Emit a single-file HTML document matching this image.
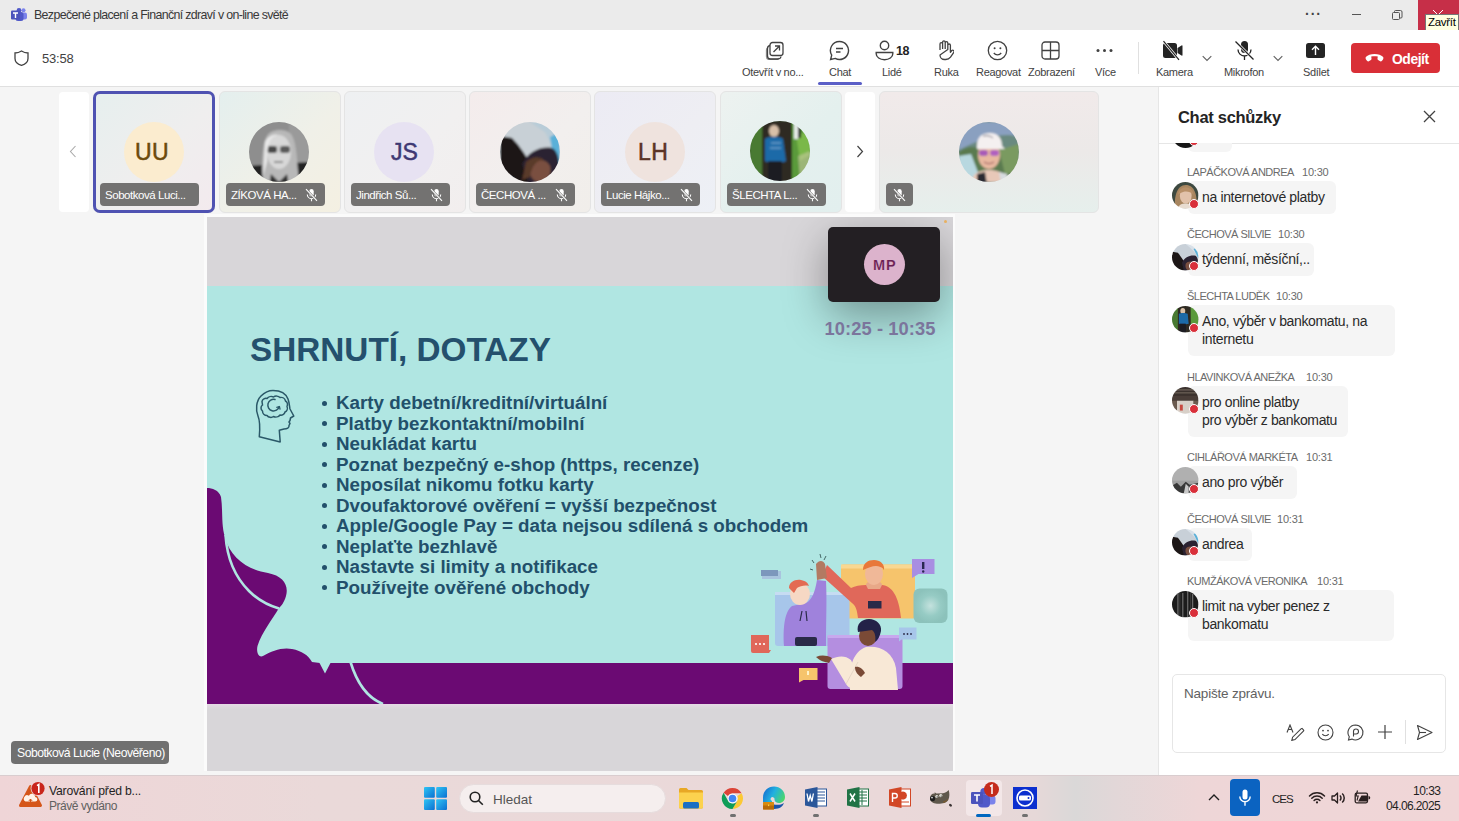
<!DOCTYPE html>
<html><head><meta charset="utf-8">
<style>
*{box-sizing:border-box;margin:0;padding:0}
html,body{width:1459px;height:821px;overflow:hidden;background:#f5f5f5;font-family:"Liberation Sans",sans-serif;color:#242424}
.a{position:absolute}
.t{position:absolute;white-space:nowrap;line-height:1}
#titlebar{left:0;top:0;width:1459px;height:30px;background:#ebebeb}
#toolbar{left:0;top:30px;width:1459px;height:57px;background:#fff;border-bottom:1px solid #e0e0e0;box-shadow:0 1px 1px rgba(0,0,0,0.05)}
#main{left:0;top:87px;width:1158px;height:688px;background:#f5f5f5}
#chat{left:1158px;top:87px;width:301px;height:688px;background:#fff;border-left:1px solid #e8e8e8}
#taskbar{left:0;top:775px;width:1459px;height:46px;background:#ecd8da}
.lbl{font-size:11px;color:#424242;letter-spacing:-0.3px}
.tile{position:absolute;top:91px;height:122px;width:122px;border-radius:6px;border:1px solid #e4e4e4;background:linear-gradient(135deg,#e9f1ef,#f3f0ee 60%,#f1ecee)}
.badge{position:absolute;top:92px;height:23px;border-radius:4px;background:#707070;color:#fff;font-size:11.5px;letter-spacing:-0.3px}
.av{position:absolute;border-radius:50%}
.cname{position:absolute;font-size:11px;color:#6b6b6b;letter-spacing:-0.5px;white-space:nowrap;line-height:1}
.bub{position:absolute;background:#f5f5f5;border-radius:6px}
.btxt{position:absolute;font-size:14px;color:#2a2a2a;letter-spacing:-0.35px;white-space:nowrap;line-height:19px}
.cav{position:absolute;width:27px;height:27px;border-radius:50%}
.rdot{position:absolute;width:10px;height:10px;border-radius:50%;background:#d92f3a;border:1.5px solid #fff}
.bl{font-size:18.8px;font-weight:700;color:#22506b;letter-spacing:0}
</style></head><body>
<!-- TITLE BAR -->
<div id="titlebar" class="a"></div>
<svg class="a" style="left:11px;top:8px" width="16" height="13" viewBox="0 0 16 13">
<circle cx="12.5" cy="2.2" r="2" fill="#7b83eb"/><rect x="9" y="4.5" width="7" height="7" rx="2" fill="#7b83eb"/>
<circle cx="8" cy="2.5" r="2.4" fill="#5059c9"/><rect x="4.5" y="4" width="8" height="9" rx="2.5" fill="#5059c9"/>
<rect x="0" y="2.5" width="9" height="9" rx="1" fill="#4b53bc"/><path d="M2 5h5M4.5 5v5" stroke="#fff" stroke-width="1.4"/>
</svg>
<div class="t" style="left:34px;top:8.5px;font-size:12.4px;color:#383838;letter-spacing:-0.65px">Bezpečené placení a Finanční zdraví v on-line světě</div>
<div class="t" style="left:1305px;top:7px;font-size:14px;color:#444;letter-spacing:1px;font-weight:700">···</div>
<div class="a" style="left:1352px;top:14px;width:9px;height:1px;background:#555"></div>
<svg class="a" style="left:1392px;top:10px" width="11" height="10" viewBox="0 0 11 10"><rect x="0.5" y="2.5" width="7" height="7" rx="1" fill="none" stroke="#555"/><path d="M2.5 2.5V1.5a1 1 0 0 1 1-1h5a1.5 1.5 0 0 1 1.5 1.5v5a1 1 0 0 1-1 1h-1" fill="none" stroke="#555"/></svg>
<div class="a" style="left:1418px;top:0;width:41px;height:30px;background:#c62f48"></div>
<svg class="a" style="left:1432px;top:9px" width="12" height="12" viewBox="0 0 12 12"><path d="M1 1L11 11M11 1L1 11" stroke="#fff" stroke-width="1"/></svg>
<div class="a" style="left:1425px;top:14px;width:34px;height:18px;background:#ffffe1;border:1px solid #767676"></div>
<div class="t" style="left:1428px;top:17px;font-size:11.5px;color:#000;letter-spacing:-0.3px">Zavřít</div>

<!-- TOOLBAR -->
<div id="toolbar" class="a"></div>
<svg class="a" style="left:14px;top:50px" width="15" height="16" viewBox="0 0 15 16"><path d="M7.5 1C5.5 2.3 3.3 3 1 3v5.5c0 3.3 2.6 5.8 6.5 6.9 3.9-1.1 6.5-3.6 6.5-6.9V3C11.7 3 9.5 2.3 7.5 1z" fill="none" stroke="#424242" stroke-width="1.3"/></svg>
<div class="t" style="left:42px;top:52px;font-size:13px;color:#424242;letter-spacing:-0.2px">53:58</div>


<!-- toolbar buttons -->
<svg class="a" style="left:765px;top:41px" width="20" height="19" viewBox="0 0 20 19" fill="none" stroke="#424242" stroke-width="1.3">
<rect x="5" y="1.5" width="13" height="13" rx="2.5"/><path d="M5 4.5a3 3 0 0 0-2.5 3V15a3 3 0 0 0 3 3h7.5a3 3 0 0 0 3-2.5"/><path d="M3 6.5a3 3 0 0 0-1.5 2.5V15.5a3 3 0 0 0 3 3h7a3 3 0 0 0 2.5-1.5" opacity="0.6"/><path d="M8.5 11L14.5 5M10 5h4.5v4.5"/>
</svg>
<div class="t lbl" style="left:742px;top:67px">Otevřít v no...</div>
<svg class="a" style="left:829px;top:40px" width="21" height="21" viewBox="0 0 21 21" fill="none" stroke="#424242" stroke-width="1.4">
<path d="M10.5 1.5a9 9 0 1 1-4.3 16.9L1.6 19.5l1.1-4.4A9 9 0 0 1 10.5 1.5z"/><path d="M7 8.5h7M7 12h4.5"/>
</svg>
<div class="t lbl" style="left:829px;top:67px">Chat</div>
<div class="a" style="left:818px;top:82px;width:44px;height:3px;border-radius:2px;background:#5b5fc7"></div>
<svg class="a" style="left:875px;top:40px" width="19" height="21" viewBox="0 0 19 21" fill="none" stroke="#424242" stroke-width="1.4">
<circle cx="9.5" cy="5.5" r="4.2"/><path d="M1.2 12.5h16.6v1.2c0 3.5-3.7 6-8.3 6s-8.3-2.5-8.3-6z"/>
</svg>
<div class="t" style="left:896px;top:45px;font-size:12.5px;font-weight:700;color:#242424;letter-spacing:-0.4px">18</div>
<div class="t lbl" style="left:882px;top:67px">Lidé</div>
<svg class="a" style="left:936px;top:40px" width="18" height="21" viewBox="0 0 18 21" fill="none" stroke="#424242" stroke-width="1.3" stroke-linejoin="round">
<path d="M4 10V4a1.3 1.3 0 0 1 2.6 0v5M6.6 9V2.2a1.3 1.3 0 0 1 2.6 0V9M9.2 9V3a1.3 1.3 0 0 1 2.6 0v6.5M11.8 9.5V5.3a1.3 1.3 0 0 1 2.6 0v7l1.4-1.8a1.4 1.4 0 0 1 2 1.9l-3.3 4.8A6 6 0 0 1 9.6 19.5H8.5A4.5 4.5 0 0 1 4 15z"/>
</svg>
<div class="t lbl" style="left:934px;top:67px">Ruka</div>
<svg class="a" style="left:987px;top:40px" width="21" height="21" viewBox="0 0 21 21" fill="none" stroke="#424242" stroke-width="1.3">
<circle cx="10.5" cy="10.5" r="9.2"/><path d="M6.8 13a4.6 4.6 0 0 0 7.4 0"/><circle cx="7.6" cy="8.3" r="1" fill="#424242" stroke="none"/><circle cx="13.4" cy="8.3" r="1" fill="#424242" stroke="none"/>
</svg>
<div class="t lbl" style="left:976px;top:67px">Reagovat</div>
<svg class="a" style="left:1041px;top:41px" width="19" height="19" viewBox="0 0 19 19" fill="none" stroke="#424242" stroke-width="1.3">
<rect x="1" y="1" width="17" height="17" rx="3"/><path d="M9.5 1v17M1 9.5h17"/>
</svg>
<div class="t lbl" style="left:1028px;top:67px">Zobrazení</div>
<svg class="a" style="left:1096px;top:48px" width="17" height="5" viewBox="0 0 17 5"><circle cx="2" cy="2.5" r="1.5" fill="#424242"/><circle cx="8.5" cy="2.5" r="1.5" fill="#424242"/><circle cx="15" cy="2.5" r="1.5" fill="#424242"/></svg>
<div class="t lbl" style="left:1095px;top:67px">Více</div>
<div class="a" style="left:1138px;top:42px;width:1px;height:32px;background:#e0e0e0"></div>
<svg class="a" style="left:1161px;top:40px" width="23" height="21" viewBox="0 0 23 21">
<path d="M2 5.5a2.5 2.5 0 0 1 2.5-2.5h9a2.5 2.5 0 0 1 2.5 2.5v10a2.5 2.5 0 0 1-2.5 2.5h-9A2.5 2.5 0 0 1 2 15.5z" fill="#242424"/><path d="M16.5 8l4-2.6a.7.7 0 0 1 1 .6v9a.7.7 0 0 1-1 .6l-4-2.6z" fill="#242424"/>
<path d="M2.5 1.2L18 19.8" stroke="#fff" stroke-width="2.6"/><path d="M2.5 1.2L18 19.8" stroke="#242424" stroke-width="1.2"/>
</svg>
<div class="t lbl" style="left:1156px;top:67px">Kamera</div>
<svg class="a" style="left:1202px;top:55px" width="10" height="7" viewBox="0 0 10 7"><path d="M.7 1.2L5 5.5 9.3 1.2" fill="none" stroke="#616161" stroke-width="1.1"/></svg>
<svg class="a" style="left:1234px;top:40px" width="21" height="21" viewBox="0 0 21 21">
<rect x="7" y="1" width="7" height="12" rx="3.5" fill="#242424"/><path d="M4 9.5a6.5 6.5 0 0 0 13 0M10.5 16v4" fill="none" stroke="#242424" stroke-width="1.3"/>
<path d="M1.5 1.5L19.5 19.5" stroke="#fff" stroke-width="2.6"/><path d="M1.5 1.5L19.5 19.5" stroke="#242424" stroke-width="1.2"/>
</svg>
<div class="t lbl" style="left:1224px;top:67px">Mikrofon</div>
<svg class="a" style="left:1273px;top:55px" width="10" height="7" viewBox="0 0 10 7"><path d="M.7 1.2L5 5.5 9.3 1.2" fill="none" stroke="#616161" stroke-width="1.1"/></svg>
<svg class="a" style="left:1306px;top:43px" width="19" height="15" viewBox="0 0 19 15">
<rect x="0" y="0" width="19" height="15" rx="2.5" fill="#242424"/><path d="M9.5 12V3.5M6 6.8l3.5-3.5 3.5 3.5" fill="none" stroke="#fff" stroke-width="1.4"/>
</svg>
<div class="t lbl" style="left:1303px;top:67px">Sdílet</div>
<div class="a" style="left:1351px;top:43px;width:89px;height:30px;border-radius:4px;background:#d92f37"></div>
<svg class="a" style="left:1365px;top:53px" width="19" height="10" viewBox="0 0 19 10"><path d="M9.5 1C5.8 1 2.6 2.2 1.1 3.7.4 4.4.5 5.6 1 6.4l1 1.3c.5.7 1.5.9 2.2.4l1.7-1.2c.6-.4.8-1.1.6-1.7L6.2 3.6c2-.6 4.6-.6 6.6 0l-.3 1.6c-.2.6 0 1.3.6 1.7l1.7 1.2c.7.5 1.7.3 2.2-.4l1-1.3c.5-.8.6-2-.1-2.7C16.4 2.2 13.2 1 9.5 1z" fill="#fff"/></svg>
<div class="t" style="left:1392px;top:52.5px;font-size:13.9px;font-weight:700;color:#fff;letter-spacing:-0.45px">Odejít</div>
<!-- MAIN -->
<div class="a" style="left:0;top:87px;width:1158px;height:688px;background:#f5f5f5"></div>
<div class="a" style="left:59px;top:92px;width:30px;height:120px;background:#fff;border-radius:4px"></div>
<svg class="a" style="left:69px;top:145px" width="8" height="13" viewBox="0 0 8 13"><path d="M6.5 1L1.5 6.5 6.5 12" fill="none" stroke="#aaa" stroke-width="1.1"/></svg>
<div class="a" style="left:845px;top:92px;width:30px;height:120px;background:#fff;border-radius:4px"></div>
<svg class="a" style="left:856px;top:145px" width="8" height="13" viewBox="0 0 8 13"><path d="M1.5 1L6.5 6.5 1.5 12" fill="none" stroke="#424242" stroke-width="1.2"/></svg>
<div class="tile" style="left:93px;background:linear-gradient(135deg,#e6efee 0%,#efeeee 55%,#f3eaee 100%)"></div>
<div class="a" style="left:93px;top:91px;width:122px;height:122px;border:3px solid #4f52b2;border-radius:7px"></div>
<div class="av" style="left:124px;top:122px;width:60px;height:60px;background:#fbeccf"></div>
<div class="a" style="left:100px;top:183px;width:99px;height:23px;border-radius:4px;background:#737271"></div>
<div class="t" style="left:105px;top:190px;font-size:11.5px;color:#fff;letter-spacing:-0.45px">Sobotková Luci...</div>
<div class="tile" style="left:219px;background:linear-gradient(135deg,#e4efee 0%,#f0f0e8 55%,#f4f0e2 100%)"></div>
<svg class="a" style="left:249px;top:122px" width="60" height="60" viewBox="0 0 60 60"><defs><clipPath id="cz"><circle cx="30" cy="30" r="30"/></clipPath><filter id="fz" x="-10%" y="-10%" width="120%" height="120%"><feGaussianBlur stdDeviation="0.9"/></filter></defs><g clip-path="url(#cz)"><g filter="url(#fz)"><rect x="-5" y="-5" width="70" height="70" fill="#8e8e8e"/><rect x="40" y="0" width="25" height="45" fill="#9a9a9a"/>
<path d="M0 44 L60 40 L60 65 L0 65z" fill="#222"/>
<path d="M14 60 C12 40 14 20 18 14 C22 7 36 6 42 12 C48 20 48 40 50 60z" fill="#b8b8b8"/>
<ellipse cx="30" cy="30" rx="12" ry="17" fill="#d8d8d8"/><path d="M19 23c3 7 6 9 11 8 5 1 9-1 12-8" fill="#d0d0d0"/>
<rect x="18" y="24" width="10" height="7" rx="3" fill="#4a4a4a"/><rect x="31" y="24" width="10" height="7" rx="3" fill="#5a5a5a"/>
<path d="M25 40h9" stroke="#777" stroke-width="1.5"/><path d="M22 52 L30 60 L38 52 L40 65 L20 65z" fill="#333"/>
<path d="M16 20 C20 12 28 12 30 13 C22 14 18 20 18 40 L14 55z" fill="#e8e8e8"/></g></g></svg>
<div class="a" style="left:226px;top:183px;width:99px;height:23px;border-radius:4px;background:#737271"></div>
<div class="t" style="left:231px;top:190px;font-size:11.5px;color:#fff;letter-spacing:-0.45px">ZÍKOVÁ HA...</div>
<svg class="a" style="left:305px;top:188px" width="13" height="14" viewBox="0 0 13 14" fill="none" stroke="#fff" stroke-width="1.1"><rect x="4.3" y="1" width="4.4" height="7.5" rx="2.2" fill="#fff" stroke="none"/><path d="M2.3 6.5a4.2 4.2 0 0 0 8.4 0M6.5 10.8v2.4"/><path d="M1 1.2L12 12.8" stroke="#737271" stroke-width="2.2"/><path d="M1 1.2L12 12.8"/></svg>
<div class="tile" style="left:344px;background:linear-gradient(135deg,#eef0f2 0%,#f1f0f0 55%,#f2eeee 100%)"></div>
<div class="av" style="left:374px;top:122px;width:60px;height:60px;background:#e7e2f2"></div>
<div class="a" style="left:351px;top:183px;width:99px;height:23px;border-radius:4px;background:#737271"></div>
<div class="t" style="left:356px;top:190px;font-size:11.5px;color:#fff;letter-spacing:-0.45px">Jindřich Sů...</div>
<svg class="a" style="left:430px;top:188px" width="13" height="14" viewBox="0 0 13 14" fill="none" stroke="#fff" stroke-width="1.1"><rect x="4.3" y="1" width="4.4" height="7.5" rx="2.2" fill="#fff" stroke="none"/><path d="M2.3 6.5a4.2 4.2 0 0 0 8.4 0M6.5 10.8v2.4"/><path d="M1 1.2L12 12.8" stroke="#737271" stroke-width="2.2"/><path d="M1 1.2L12 12.8"/></svg>
<div class="tile" style="left:469px;background:linear-gradient(135deg,#f4ecec 0%,#f2efee 55%,#f1eeea 100%)"></div>
<svg class="a" style="left:500px;top:122px" width="60" height="60" viewBox="0 0 60 60"><defs><clipPath id="cc"><circle cx="30" cy="30" r="30"/></clipPath><filter id="fc" x="-10%" y="-10%" width="120%" height="120%"><feGaussianBlur stdDeviation="0.9"/></filter></defs><g clip-path="url(#cc)"><g filter="url(#fc)"><rect x="-5" y="-5" width="70" height="70" fill="#c8d0d6"/><path d="M30 0 L60 0 L60 40 C55 30 50 20 45 10z" fill="#b8ccd8"/><path d="M50 15 L60 10 L60 45 L54 40z" fill="#5ab0d8"/>
<path d="M0 14 L12 16 C20 24 26 34 32 44 L34 65 L0 65z" fill="#1a1212"/>
<path d="M22 42 C28 30 40 24 52 26 C60 30 60 45 58 60 L30 65z" fill="#2a2230"/>
<path d="M30 44 C36 36 46 36 50 44 C52 52 48 58 40 60 C32 60 28 52 30 44z" fill="#7a5040"/>
<path d="M26 40 C32 34 40 34 44 38 C36 38 32 44 30 55 L22 58z" fill="#5a3a2a"/>
<path d="M0 50 L14 56 L10 65 L0 65z" fill="#2a4a60"/></g></g></svg>
<div class="a" style="left:476px;top:183px;width:99px;height:23px;border-radius:4px;background:#737271"></div>
<div class="t" style="left:481px;top:190px;font-size:11.5px;color:#fff;letter-spacing:-0.45px">ČECHOVÁ ...</div>
<svg class="a" style="left:555px;top:188px" width="13" height="14" viewBox="0 0 13 14" fill="none" stroke="#fff" stroke-width="1.1"><rect x="4.3" y="1" width="4.4" height="7.5" rx="2.2" fill="#fff" stroke="none"/><path d="M2.3 6.5a4.2 4.2 0 0 0 8.4 0M6.5 10.8v2.4"/><path d="M1 1.2L12 12.8" stroke="#737271" stroke-width="2.2"/><path d="M1 1.2L12 12.8"/></svg>
<div class="tile" style="left:594px;background:linear-gradient(135deg,#ecebf4 0%,#eeeef3 55%,#edf0f6 100%)"></div>
<div class="av" style="left:625px;top:122px;width:60px;height:60px;background:#efe3de"></div>
<div class="a" style="left:601px;top:183px;width:99px;height:23px;border-radius:4px;background:#737271"></div>
<div class="t" style="left:606px;top:190px;font-size:11.5px;color:#fff;letter-spacing:-0.45px">Lucie Hájko...</div>
<svg class="a" style="left:680px;top:188px" width="13" height="14" viewBox="0 0 13 14" fill="none" stroke="#fff" stroke-width="1.1"><rect x="4.3" y="1" width="4.4" height="7.5" rx="2.2" fill="#fff" stroke="none"/><path d="M2.3 6.5a4.2 4.2 0 0 0 8.4 0M6.5 10.8v2.4"/><path d="M1 1.2L12 12.8" stroke="#737271" stroke-width="2.2"/><path d="M1 1.2L12 12.8"/></svg>
<div class="tile" style="left:720px;background:linear-gradient(135deg,#edf2f0 0%,#e4f0ee 55%,#e2efee 100%)"></div>
<svg class="a" style="left:750px;top:121px" width="60" height="60" viewBox="0 0 60 60"><defs><clipPath id="cs"><circle cx="30" cy="30" r="30"/></clipPath><filter id="fs" x="-10%" y="-10%" width="120%" height="120%"><feGaussianBlur stdDeviation="0.9"/></filter></defs><g clip-path="url(#cs)"><g filter="url(#fs)"><rect x="-5" y="-5" width="70" height="70" fill="#3a4a2a"/>
<path d="M0 10 L20 0 L20 65 L0 65z" fill="#4a7a30"/><path d="M40 0 L65 0 L65 65 L42 65z" fill="#5a9a3a"/><path d="M46 14 L60 10 L60 34 L50 40z" fill="#7ab84a"/><path d="M48 35 L60 30 L60 55 L50 60z" fill="#c8c8a0" opacity="0.6"/>
<rect x="12" y="0" width="30" height="65" fill="#2e2a22"/><rect x="44" y="0" width="4" height="18" fill="#e8ecea"/><rect x="48" y="3" width="3" height="14" fill="#222"/>
<ellipse cx="24" cy="10" rx="5" ry="6" fill="#d8c0a8"/>
<path d="M15 18 C18 15 30 15 33 18 L36 40 C30 43 20 43 15 40z" fill="#1e6aa8"/><path d="M21 22h10M20 27h11" stroke="#8ab8d8" stroke-width="1.2"/>
<rect x="18" y="40" width="14" height="25" fill="#1a1a22"/></g></g></svg>
<div class="a" style="left:727px;top:183px;width:99px;height:23px;border-radius:4px;background:#737271"></div>
<div class="t" style="left:732px;top:190px;font-size:11.5px;color:#fff;letter-spacing:-0.45px">ŠLECHTA L...</div>
<svg class="a" style="left:806px;top:188px" width="13" height="14" viewBox="0 0 13 14" fill="none" stroke="#fff" stroke-width="1.1"><rect x="4.3" y="1" width="4.4" height="7.5" rx="2.2" fill="#fff" stroke="none"/><path d="M2.3 6.5a4.2 4.2 0 0 0 8.4 0M6.5 10.8v2.4"/><path d="M1 1.2L12 12.8" stroke="#737271" stroke-width="2.2"/><path d="M1 1.2L12 12.8"/></svg>
<div class="t" style="left:135px;top:141px;font-size:23px;color:#6b4a0c;letter-spacing:0.5px;-webkit-text-stroke:0.5px #6b4a0c">UU</div>
<div class="t" style="left:391px;top:141px;font-size:23px;color:#3e3873;letter-spacing:0px;-webkit-text-stroke:0.5px #3e3873">JS</div>
<div class="t" style="left:638px;top:141px;font-size:23px;color:#5b3426;letter-spacing:0.5px;-webkit-text-stroke:0.5px #5b3426">LH</div>
<div class="a" style="left:879px;top:91px;width:220px;height:122px;border-radius:6px;border:1px solid #e4e4e4;background:linear-gradient(180deg,#f1eaea 0%,#ece9e8 50%,#e6efec 100%)"></div>
<svg class="a" style="left:959px;top:122px" width="60" height="60" viewBox="0 0 60 60"><defs><clipPath id="cb"><circle cx="30" cy="30" r="30"/></clipPath><filter id="fb" x="-10%" y="-10%" width="120%" height="120%"><feGaussianBlur stdDeviation="0.9"/></filter></defs><g clip-path="url(#cb)"><g filter="url(#fb)"><rect x="-5" y="-5" width="70" height="70" fill="#6a8a80"/><path d="M0 0 L60 0 L60 15 C45 10 25 15 0 28z" fill="#8aa0c0"/>
<path d="M0 30 C10 22 20 25 30 30 L60 25 L60 60 L0 60z" fill="#5a7a50"/><path d="M0 34 L12 32 L22 58 L0 60z" fill="#b8d8e0"/>
<path d="M40 28 L60 22 L60 50 L46 52z" fill="#7a9a60"/>
<path d="M12 60 C14 50 22 48 30 48 C38 48 46 50 48 60z" fill="#e8c8b8"/><path d="M18 52 L26 50 L28 62 L18 62z" fill="#2a2a30"/><path d="M40 50 L48 52 L50 62 L42 62z" fill="#d8dce0"/>
<ellipse cx="30" cy="33" rx="11" ry="14" fill="#e8b8a0"/>
<path d="M18 24 C18 14 24 11 31 11 C38 11 43 15 43 24 L46 27 L18 27z" fill="#f4f0f0"/><path d="M24 14c4-1 8 0 10 2" stroke="#556" stroke-width="0.8" fill="none"/>
<rect x="20" y="28" width="9" height="6" rx="3" fill="#a85ab8"/><rect x="31" y="28" width="9" height="6" rx="3" fill="#b060c0"/>
<path d="M25 40c3 2 7 2 10 0" stroke="#a06060" stroke-width="1.2" fill="none"/></g></g></svg>
<div class="a" style="left:886px;top:183px;width:27px;height:23px;border-radius:4px;background:#737271"></div>
<svg class="a" style="left:893px;top:188px" width="13" height="14" viewBox="0 0 13 14" fill="none" stroke="#fff" stroke-width="1.1"><rect x="4.3" y="1" width="4.4" height="7.5" rx="2.2" fill="#fff" stroke="none"/><path d="M2.3 6.5a4.2 4.2 0 0 0 8.4 0M6.5 10.8v2.4"/><path d="M1 1.2L12 12.8" stroke="#737271" stroke-width="2.2"/><path d="M1 1.2L12 12.8"/></svg>
<!-- SHARED SCREEN -->
<div class="a" style="left:204px;top:214px;width:751px;height:560px;background:#fbfbfb"></div>
<div class="a" style="left:207px;top:217px;width:746px;height:554px;background:#d8d6d9"></div>
<svg class="a" style="left:207px;top:286px" width="746" height="418" viewBox="207 286 746 418">
<rect x="207" y="286" width="746" height="418" fill="#b0e6e2"/>
<rect x="207" y="663" width="746" height="41" fill="#6b0a73"/>
<path d="M207 488 C212 488 219 490 221 497 C223 510 221 525 225 537 C230 558 248 570 268 573 C283 576 289 585 286 596 C284 603 281 606 279 608 C272 620 262 632 257.5 646 C256 653 259 658 263 656 C272 651 282 647 292 649 C302 651 308 655 312 662 L320 663 L324.5 673 L331 663 L953 663 L953 704 L207 704 Z" fill="#6b0a73"/>
<path d="M225.5 535 C227 558 235 577 249 591 C257 599 267 605 279 608.5" fill="none" stroke="#b0e6e2" stroke-width="2.6"/>
<path d="M350.5 662 C356 680 365 697 383 704" fill="none" stroke="#b0e6e2" stroke-width="2.6"/>
<path d="M319 662 L325 673.5 L331 662z" fill="#b0e6e2"/>
</svg>
<div class="a" style="left:207px;top:704px;width:746px;height:6px;background:linear-gradient(180deg,#e6dae6,#dcd8dc 60%,#d8d6d9)"></div>
<!-- slide text -->
<div class="t" style="left:250px;top:333px;font-size:33.3px;font-weight:700;color:#24506d;letter-spacing:0px">SHRNUTÍ, DOTAZY</div>
<div class="a" style="left:322px;top:400.5px;width:5px;height:5px;border-radius:50%;background:#22506b"></div>
<div class="t bl" style="left:336px;top:394.0px">Karty debetní/kreditní/virtuální</div>
<div class="a" style="left:322px;top:421.0px;width:5px;height:5px;border-radius:50%;background:#22506b"></div>
<div class="t bl" style="left:336px;top:414.5px">Platby bezkontaktní/mobilní</div>
<div class="a" style="left:322px;top:441.5px;width:5px;height:5px;border-radius:50%;background:#22506b"></div>
<div class="t bl" style="left:336px;top:435.0px">Neukládat kartu</div>
<div class="a" style="left:322px;top:462.0px;width:5px;height:5px;border-radius:50%;background:#22506b"></div>
<div class="t bl" style="left:336px;top:455.5px">Poznat bezpečný e-shop (https, recenze)</div>
<div class="a" style="left:322px;top:482.5px;width:5px;height:5px;border-radius:50%;background:#22506b"></div>
<div class="t bl" style="left:336px;top:476.0px">Neposílat nikomu fotku karty</div>
<div class="a" style="left:322px;top:503.0px;width:5px;height:5px;border-radius:50%;background:#22506b"></div>
<div class="t bl" style="left:336px;top:496.5px">Dvoufaktorové ověření = vyšší bezpečnost</div>
<div class="a" style="left:322px;top:523.5px;width:5px;height:5px;border-radius:50%;background:#22506b"></div>
<div class="t bl" style="left:336px;top:517.0px">Apple/Google Pay = data nejsou sdílená s obchodem</div>
<div class="a" style="left:322px;top:544.0px;width:5px;height:5px;border-radius:50%;background:#22506b"></div>
<div class="t bl" style="left:336px;top:537.5px">Neplaťte bezhlavě</div>
<div class="a" style="left:322px;top:564.5px;width:5px;height:5px;border-radius:50%;background:#22506b"></div>
<div class="t bl" style="left:336px;top:558.0px">Nastavte si limity a notifikace</div>
<div class="a" style="left:322px;top:585.0px;width:5px;height:5px;border-radius:50%;background:#22506b"></div>
<div class="t bl" style="left:336px;top:578.5px">Používejte ověřené obchody</div>
<svg class="a" style="left:254px;top:389px" width="42" height="56" viewBox="0 0 42 56" fill="none" stroke="#2a5868" stroke-width="1.5" stroke-linejoin="round" stroke-linecap="round">
<path d="M5.3 47.7C6 40 6.5 33 4 27 1.5 21 2 12 7 7 11 3 15 1.4 19 1.4 26 1.4 32 4.5 34 10 35.5 14 35.5 18 36 20L39.8 27 36.5 29 36 31.5 35 33 36 34.5 35 36.5C35.5 39 33 40 30 40L25.3 41.2 26.2 52.9Z"/>
<path d="M8 12.5c.5-2.5 3-3.5 5-3 1.5-2 4.5-2.5 6.5-1.5 2-1.5 5-1 6.5.5 2.5-.5 5 1 5.5 3.5 2 1 2.5 3.5 1.5 5.5 1 2 0 4.5-2 5.5-.5 2.5-3 3.5-5 3-1.5 2-4.5 2.5-6.5 1.5-2 1.5-5 1-6.5-1-2.5 0-4.5-2-4.5-4.5-2-1.5-2-4.5 0-6z"/>
<path d="M21 10.5a5.8 5.8 0 1 0 4.2 7.3"/><path d="M22.8 18.4l2.6-.9.6 2.6" stroke-width="1.3"/>
</svg>
<div class="a" style="left:207px;top:217px;width:746px;height:554px;overflow:hidden"><div class="a" style="left:621px;top:10px;width:112px;height:75px;border-radius:5px;background:#231f23;box-shadow:0 14px 44px rgba(0,0,0,0.36)"></div></div>
<div class="av" style="left:864px;top:244px;width:41px;height:41px;background:#dcb3cc"></div>
<div class="t" style="left:873px;top:258px;font-size:14.5px;font-weight:700;color:#6a2152;letter-spacing:1px;-webkit-text-stroke:0.2px #dcb3cc">MP</div>
<div class="a" style="left:944px;top:220px;width:3px;height:3px;border-radius:50%;background:#e8b060"></div>
<div class="t" style="left:824.5px;top:320px;font-size:18.3px;font-weight:700;color:#7b759c;letter-spacing:0.1px">10:25 - 10:35</div>
<!-- name label -->
<div class="a" style="left:11px;top:741px;width:158px;height:23px;border-radius:4px;background:#707070"></div>
<div class="t" style="left:17px;top:747px;font-size:12.2px;color:#fff;letter-spacing:-0.5px">Sobotková Lucie (Neověřeno)</div>
<!-- CHAT PANEL -->
<div class="a" style="left:1158px;top:87px;width:301px;height:688px;background:#fff;border-left:1px solid #e6e6e6"></div>
<div class="t" style="left:1178px;top:108.5px;font-size:16.5px;font-weight:700;color:#242424;letter-spacing:-0.3px">Chat schůzky</div>
<svg class="a" style="left:1422.5px;top:110px" width="13" height="13" viewBox="0 0 13 13"><path d="M1 1L12 12M12 1L1 12" stroke="#424242" stroke-width="1.3"/></svg>
<div class="a" style="left:1159px;top:143px;width:300px;height:1px;background:#e6e6e6"></div>
<!-- partial top bubble -->
<div class="bub" style="left:1188px;top:130px;width:44px;height:22px"></div>
<div class="cav" style="left:1172px;top:121px;background:#161616"></div>
<div class="rdot" style="left:1188.5px;top:135.5px"></div>
<div class="a" style="left:1159px;top:87px;width:300px;height:56px;background:#fff"></div>
<div class="t" style="left:1178px;top:108.5px;font-size:16.5px;font-weight:700;color:#242424;letter-spacing:-0.3px">Chat schůzky</div>
<svg class="a" style="left:1422.5px;top:110px" width="13" height="13" viewBox="0 0 13 13"><path d="M1 1L12 12M12 1L1 12" stroke="#424242" stroke-width="1.3"/></svg>
<div class="cname" style="left:1187px;top:166.5px">LAPÁČKOVÁ ANDREA</div>
<div class="cname" style="left:1302px;top:166.5px;letter-spacing:-0.2px">10:30</div>
<div class="bub" style="left:1188px;top:181px;width:148px;height:33px"></div>
<div class="btxt" style="left:1202px;top:187.5px">na internetové platby</div>
<svg class="a" style="left:1172px;top:182.0px" width="26.5" height="26.5" viewBox="0 0 27 27"><defs><clipPath id="cc183_5"><circle cx="13.5" cy="13.5" r="13.5"/></clipPath><filter id="cf183_5"><feGaussianBlur stdDeviation="0.5"/></filter></defs><g clip-path="url(#cc183_5)"><g filter="url(#cf183_5)"><rect width="27" height="27" fill="#3e4a40"/><path d="M3 27C2 15 5 3 14 3s12 10 11 24z" fill="#a88660"/><ellipse cx="14" cy="14" rx="6" ry="8" fill="#e2c2aa"/><path d="M6 13c1-6 6-9 11-7 3 1 5 4 5 7-3-3-7-4-10-3-3 1-5 2-6 3z" fill="#b89068"/><path d="M6 27c1-4 4-5 8-5s6 1 7 5z" fill="#e8dcd0"/></g></g></svg>
<div class="rdot" style="left:1188.5px;top:198.5px"></div>
<div class="cname" style="left:1187px;top:228.5px">ČECHOVÁ SILVIE</div>
<div class="cname" style="left:1278px;top:228.5px;letter-spacing:-0.2px">10:30</div>
<div class="bub" style="left:1188px;top:243px;width:126px;height:33px"></div>
<div class="btxt" style="left:1202px;top:249.5px">týdenní, měsíční,..</div>
<svg class="a" style="left:1172px;top:244.0px" width="26.5" height="26.5" viewBox="0 0 27 27"><defs><clipPath id="cc245_5"><circle cx="13.5" cy="13.5" r="13.5"/></clipPath><filter id="cf245_5"><feGaussianBlur stdDeviation="0.5"/></filter></defs><g clip-path="url(#cc245_5)"><g filter="url(#cf245_5)"><rect width="27" height="27" fill="#c8d0d8"/><path d="M14 0h13v14c-3-5-7-9-13-14z" fill="#d8e0e8"/><path d="M22 5l5-2v12z" fill="#5ab0d8"/><path d="M0 8l6 1c4 5 7 10 9 15v3H0z" fill="#1a1212"/><path d="M10 19c3-6 9-8 14-7 3 2 3 8 2 15H12z" fill="#2a2230"/><path d="M14 20c2-3 7-3 8 0 1 4-1 7-4 7s-5-3-4-7z" fill="#7a5040"/></g></g></svg>
<div class="rdot" style="left:1188.5px;top:260.5px"></div>
<div class="cname" style="left:1187px;top:290.5px">ŠLECHTA LUDĚK</div>
<div class="cname" style="left:1276px;top:290.5px;letter-spacing:-0.2px">10:30</div>
<div class="bub" style="left:1188px;top:305px;width:207px;height:50.5px"></div>
<div class="btxt" style="left:1202px;top:311.5px">Ano, výběr v bankomatu, na</div>
<div class="btxt" style="left:1202px;top:330.3px">internetu</div>
<svg class="a" style="left:1172px;top:306.0px" width="26.5" height="26.5" viewBox="0 0 27 27"><defs><clipPath id="cc307_5"><circle cx="13.5" cy="13.5" r="13.5"/></clipPath><filter id="cf307_5"><feGaussianBlur stdDeviation="0.5"/></filter></defs><g clip-path="url(#cc307_5)"><g filter="url(#cf307_5)"><rect width="27" height="27" fill="#3a4a2a"/><path d="M0 4L9 0v27H0z" fill="#4a7a30"/><path d="M18 0h9v27h-8z" fill="#5a9a3a"/><rect x="6" y="0" width="13" height="27" fill="#2e2a22"/><ellipse cx="11" cy="5" rx="2.5" ry="3" fill="#d8c0a8"/><path d="M7 8c2-1 7-1 9 0l1 10c-3 1-8 1-10 0z" fill="#1e6aa8"/><rect x="8" y="18" width="6" height="9" fill="#1a1a22"/></g></g></svg>
<div class="rdot" style="left:1188.5px;top:322.5px"></div>
<div class="cname" style="left:1187px;top:371.5px">HLAVINKOVÁ ANEŽKA</div>
<div class="cname" style="left:1306px;top:371.5px;letter-spacing:-0.2px">10:30</div>
<div class="bub" style="left:1188px;top:386px;width:160px;height:50.5px"></div>
<div class="btxt" style="left:1202px;top:392.5px">pro online platby</div>
<div class="btxt" style="left:1202px;top:411.3px">pro výběr z bankomatu</div>
<svg class="a" style="left:1172px;top:387.0px" width="26.5" height="26.5" viewBox="0 0 27 27"><defs><clipPath id="cc388_5"><circle cx="13.5" cy="13.5" r="13.5"/></clipPath><filter id="cf388_5"><feGaussianBlur stdDeviation="0.5"/></filter></defs><g clip-path="url(#cc388_5)"><g filter="url(#cf388_5)"><rect width="27" height="27" fill="#4a3e38"/><path d="M0 0h27v9H0z" fill="#3a322e"/><path d="M2 6h23M2 3h23" stroke="#8a7a70" stroke-width="0.8"/><path d="M5 14h17v13H5z" fill="#d8d0c8"/><path d="M8 18h3v6H8z" fill="#c84a40"/><path d="M0 14h5v13H0zM22 14h5v13h-5z" fill="#6a5a50"/></g></g></svg>
<div class="rdot" style="left:1188.5px;top:403.5px"></div>
<div class="cname" style="left:1187px;top:451.5px">CIHLÁŘOVÁ MARKÉTA</div>
<div class="cname" style="left:1306px;top:451.5px;letter-spacing:-0.2px">10:31</div>
<div class="bub" style="left:1188px;top:466px;width:109px;height:33px"></div>
<div class="btxt" style="left:1202px;top:472.5px">ano pro výběr</div>
<svg class="a" style="left:1172px;top:467.0px" width="26.5" height="26.5" viewBox="0 0 27 27"><defs><clipPath id="cc468_5"><circle cx="13.5" cy="13.5" r="13.5"/></clipPath><filter id="cf468_5"><feGaussianBlur stdDeviation="0.5"/></filter></defs><g clip-path="url(#cc468_5)"><g filter="url(#cf468_5)"><rect width="27" height="27" fill="#a0a0a0"/><path d="M0 0h27v14H0z" fill="#b0b0b0"/><path d="M0 19l5-3 4 4 5-5 4 3 9-2v11H0z" fill="#383838"/><path d="M14 17l3 3v7h-5z" fill="#c8c8c8"/></g></g></svg>
<div class="rdot" style="left:1188.5px;top:483.5px"></div>
<div class="cname" style="left:1187px;top:513.5px">ČECHOVÁ SILVIE</div>
<div class="cname" style="left:1277px;top:513.5px;letter-spacing:-0.2px">10:31</div>
<div class="bub" style="left:1188px;top:528px;width:64px;height:33px"></div>
<div class="btxt" style="left:1202px;top:534.5px">andrea</div>
<svg class="a" style="left:1172px;top:529.0px" width="26.5" height="26.5" viewBox="0 0 27 27"><defs><clipPath id="cc530_5"><circle cx="13.5" cy="13.5" r="13.5"/></clipPath><filter id="cf530_5"><feGaussianBlur stdDeviation="0.5"/></filter></defs><g clip-path="url(#cc530_5)"><g filter="url(#cf530_5)"><rect width="27" height="27" fill="#c8d0d8"/><path d="M14 0h13v14c-3-5-7-9-13-14z" fill="#d8e0e8"/><path d="M22 5l5-2v12z" fill="#5ab0d8"/><path d="M0 8l6 1c4 5 7 10 9 15v3H0z" fill="#1a1212"/><path d="M10 19c3-6 9-8 14-7 3 2 3 8 2 15H12z" fill="#2a2230"/><path d="M14 20c2-3 7-3 8 0 1 4-1 7-4 7s-5-3-4-7z" fill="#7a5040"/></g></g></svg>
<div class="rdot" style="left:1188.5px;top:545.5px"></div>
<div class="cname" style="left:1187px;top:575.5px">KUMŽÁKOVÁ VERONIKA</div>
<div class="cname" style="left:1317px;top:575.5px;letter-spacing:-0.2px">10:31</div>
<div class="bub" style="left:1188px;top:590px;width:206px;height:50.5px"></div>
<div class="btxt" style="left:1202px;top:596.5px">limit na vyber penez z</div>
<div class="btxt" style="left:1202px;top:615.3px">bankomatu</div>
<svg class="a" style="left:1172px;top:591.0px" width="26.5" height="26.5" viewBox="0 0 27 27"><defs><clipPath id="cc592_5"><circle cx="13.5" cy="13.5" r="13.5"/></clipPath><filter id="cf592_5"><feGaussianBlur stdDeviation="0.5"/></filter></defs><g clip-path="url(#cc592_5)"><g filter="url(#cf592_5)"><rect width="27" height="27" fill="#1c1c1c"/><path d="M6 0v27M11 2v25M16 0v27M21 3v24" stroke="#6a6a6a" stroke-width="1.3"/><path d="M8 0v27M19 0v27" stroke="#3a3a3a" stroke-width="1"/></g></g></svg>
<div class="rdot" style="left:1188.5px;top:607.5px"></div>
<div class="a" style="left:1172px;top:674px;width:274px;height:79px;border:1px solid #e6e6e6;border-radius:5px;background:#fff"></div>
<div class="t" style="left:1184px;top:687px;font-size:13.5px;color:#616161;letter-spacing:-0.2px">Napište zprávu.</div>
<svg class="a" style="left:1286px;top:724px" width="19" height="17" viewBox="0 0 19 17" fill="none" stroke="#424242" stroke-width="1.1">
<path d="M1 8.5L4 1l3 7.5M2.2 5.5h3.6"/><path d="M15.8 4.2l1.6 1.6c.4.4.4 1 0 1.4L9 15.6l-3.2.8.8-3.2 8.4-8.4c.4-.4 1-.4 1.4 0z"/>
</svg>
<svg class="a" style="left:1316px;top:723px" width="19" height="19" viewBox="0 0 19 19" fill="none" stroke="#424242" stroke-width="1.1">
<circle cx="9.5" cy="9.5" r="7.5"/><path d="M6.3 11.2a4 4 0 0 0 6.4 0"/><circle cx="7" cy="7.6" r=".9" fill="#424242" stroke="none"/><circle cx="12" cy="7.6" r=".9" fill="#424242" stroke="none"/>
</svg>
<svg class="a" style="left:1346px;top:723px" width="19" height="19" viewBox="0 0 19 19" fill="none" stroke="#424242" stroke-width="1.1">
<path d="M9.5 2a7.5 7.5 0 1 1-3.6 14.1L2.5 17l.8-3.3A7.5 7.5 0 0 1 9.5 2z"/><path d="M7.5 13.5V8.5a2.5 2.5 0 1 1 2.5 2.5H8"/>
</svg>
<svg class="a" style="left:1376px;top:723px" width="18" height="18" viewBox="0 0 18 18" fill="none" stroke="#424242" stroke-width="1.2"><path d="M9 2v14M2 9h14"/></svg>
<div class="a" style="left:1405px;top:720px;width:1px;height:24px;background:#e0e0e0"></div>
<svg class="a" style="left:1415px;top:723px" width="19" height="19" viewBox="0 0 19 19" fill="none" stroke="#424242" stroke-width="1.1" stroke-linejoin="round">
<path d="M2.5 2.5L17 9.5 2.5 16.5 4.5 9.5z"/><path d="M4.5 9.5H11"/>
</svg>
<!-- TASKBAR -->
<div class="a" style="left:0;top:771px;width:1158px;height:4px;background:#f5f5f5"></div>
<div class="a" style="left:0;top:775px;width:1459px;height:46px;border-top:1px solid #d9cdcf;background:linear-gradient(90deg,#efd5d7 0px,#ead9d9 320px,#ead8d9 900px,#e6d8d8 1035px,#dad8d8 1075px,#e2d7d8 1115px,#eed6d7 1200px,#f0d6d7 1459px)"></div>
<svg class="a" style="left:12px;top:778px" width="40" height="36" viewBox="0 0 40 36">
<path d="M18.5 8.5L28.5 27.5H8.5z" fill="#d5561a" stroke="#d5561a" stroke-width="3" stroke-linejoin="round"/>
<path d="M13.5 23.5h9.5a2.3 2.3 0 0 0 .2-4.6 3.3 3.3 0 0 0-6.3-1.2 2.6 2.6 0 0 0-3.4 5.8z" fill="#fff4ea"/><path d="M18.5 21v6M16.8 23l1.7-2 1.7 2" stroke="#d5561a" stroke-width="1" fill="none"/>
<circle cx="26" cy="10.5" r="7.4" fill="#ecd6d8"/><circle cx="26" cy="10.5" r="6.6" fill="#c9251c"/>
<path d="M25 7.6l1.8-1.2V15" stroke="#fff" stroke-width="1.6" fill="none"/>
</svg>
<div class="t" style="left:49px;top:785px;font-size:12.2px;color:#1f1f1f;letter-spacing:-0.22px">Varování před b...</div>
<div class="t" style="left:49px;top:800px;font-size:12px;color:#616161;letter-spacing:-0.45px">Právě vydáno</div>
<!-- windows logo -->
<svg class="a" style="left:424px;top:787px" width="23" height="23" viewBox="0 0 23 23">
<defs><linearGradient id="wl" x1="0" y1="0" x2="1" y2="1"><stop offset="0" stop-color="#2fc5f5"/><stop offset="1" stop-color="#0a6fd1"/></linearGradient></defs>
<rect x="0" y="0" width="10.8" height="10.8" rx="1" fill="url(#wl)"/><rect x="12.2" y="0" width="10.8" height="10.8" rx="1" fill="url(#wl)"/><rect x="0" y="12.2" width="10.8" height="10.8" rx="1" fill="url(#wl)"/><rect x="12.2" y="12.2" width="10.8" height="10.8" rx="1" fill="url(#wl)"/>
</svg>
<div class="a" style="left:459px;top:784px;width:207px;height:29px;border-radius:15px;background:#f5eeee;border:1px solid #e6dcdd"></div>
<svg class="a" style="left:469px;top:791px" width="15" height="15" viewBox="0 0 15 15" fill="none" stroke="#222" stroke-width="1.6"><circle cx="6" cy="6" r="4.8"/><path d="M9.5 9.5L13.8 13.8"/></svg>
<div class="t" style="left:493px;top:793px;font-size:13.5px;color:#555;letter-spacing:0px">Hledat</div>
<!-- folder -->
<svg class="a" style="left:679px;top:787px" width="24" height="22" viewBox="0 0 24 22">
<path d="M0 2.5A1.5 1.5 0 0 1 1.5 1h6l2 2H22.5A1.5 1.5 0 0 1 24 4.5V20a1.5 1.5 0 0 1-1.5 1.5h-21A1.5 1.5 0 0 1 0 20z" fill="#e8a825"/>
<path d="M0 5.5h24V20a1.5 1.5 0 0 1-1.5 1.5h-21A1.5 1.5 0 0 1 0 20z" fill="#fcd24e"/>
<rect x="4" y="15" width="16" height="6.5" rx="1.5" fill="#1a6fc4"/>
</svg>
<!-- chrome -->
<svg class="a" style="left:721px;top:787px" width="23" height="23" viewBox="0 0 24 24">
<path d="M12 1a11 11 0 0 1 9.5 5.5H12a5.5 5.5 0 0 0-4.8 2.8L2.7 6A11 11 0 0 1 12 1z" fill="#db4437"/>
<path d="M21.5 6.5A11 11 0 0 1 12 23l4.8-8.2A5.5 5.5 0 0 0 17 9.3z" fill="#fcc934"/>
<path d="M12 23A11 11 0 0 1 2.7 6l4.6 8.3A5.5 5.5 0 0 0 16.8 14.8z" fill="#0f9d58"/>
<circle cx="12" cy="12" r="5" fill="#fff"/><circle cx="12" cy="12" r="4" fill="#4285f4"/>
</svg>
<div class="a" style="left:730px;top:814px;width:6px;height:3px;border-radius:2px;background:#707070"></div>
<!-- edge -->
<svg class="a" style="left:762px;top:785px" width="24" height="26" viewBox="0 0 24 26">
<defs><linearGradient id="eg" x1="0" y1="0.3" x2="1" y2="0.7"><stop offset="0" stop-color="#1570d0"/><stop offset="0.45" stop-color="#22b0e0"/><stop offset="1" stop-color="#4cd866"/></linearGradient></defs>
<path d="M1 12.5C1 6 6 1.5 12 1.5S23 6 23 12c0 3.5-2.5 6-6 6-2.5 0-4.5-1.5-4.5-3.5a2 2 0 1 0-2.5 1.5L10 17.5H1z" fill="url(#eg)"/>
<rect x="1" y="17" width="11" height="7.5" rx="0.8" fill="#d88a10"/><rect x="1" y="20.5" width="11" height="4" fill="#b86a08"/><rect x="6" y="19.5" width="1.2" height="1.6" fill="#ffd040"/>
<path d="M12 19.5c3.5 .8 7.5 .3 10-1.5-1 3-4 6-10 6z" fill="#1a55a8"/>
</svg>
<!-- word -->
<svg class="a" style="left:805px;top:787px" width="22" height="21" viewBox="0 0 22 21">
<rect x="9" y="2" width="12.5" height="17" fill="#fff" stroke="#2b579a" stroke-width="1"/><path d="M11 5h9M11 8h9M11 11h9M11 14h9" stroke="#2b579a" stroke-width="1"/>
<path d="M0 2.5L12.5 0v21L0 18.5z" fill="#2b579a"/>
<path d="M2 6.5l1.5 8 1.7-6 1.7 6 1.5-8" fill="none" stroke="#fff" stroke-width="1.3"/>
</svg>
<div class="a" style="left:813px;top:814px;width:6px;height:3px;border-radius:2px;background:#707070"></div>
<!-- excel -->
<svg class="a" style="left:847px;top:787px" width="22" height="21" viewBox="0 0 22 21">
<rect x="9" y="2" width="12.5" height="17" fill="#fff" stroke="#217346" stroke-width="1"/><path d="M11 5h9M11 8h9M11 11h9M11 14h9M15 3v15" stroke="#217346" stroke-width="1"/>
<path d="M0 2.5L12.5 0v21L0 18.5z" fill="#217346"/>
<path d="M3 6.5l5 8M8 6.5l-5 8" fill="none" stroke="#fff" stroke-width="1.5"/>
</svg>
<!-- powerpoint -->
<svg class="a" style="left:889px;top:787px" width="22" height="21" viewBox="0 0 22 21">
<rect x="9" y="2" width="12.5" height="17" fill="#fff" stroke="#d24726" stroke-width="1"/><path d="M12 5a4 4 0 1 1 0 7z" fill="#d24726"/><path d="M11 15h9" stroke="#d24726"/>
<path d="M0 2.5L12.5 0v21L0 18.5z" fill="#d24726"/>
<path d="M3.5 15V6.5h2.5a2.2 2.2 0 0 1 0 4.5H3.5" fill="none" stroke="#fff" stroke-width="1.4"/>
</svg>
<!-- gimp -->
<svg class="a" style="left:920px;top:780px" width="40" height="35" viewBox="0 0 40 35">
<path d="M10 18.5C10 15 12.5 13.2 14.8 13.6L14.6 12.2 16.5 13.4 23 13.2C25.5 12.8 27.5 11.5 28.7 10 29.6 13 29.8 17 28.3 20 26.5 23 22 24 17 23.8 13 23.4 10 21.5 10 18.5z" fill="#5f584c"/>
<path d="M23 21.5c2-.5 3.5-1.5 5-3-.5 2-2 4-4.5 4.5z" fill="#7a5a30"/>
<circle cx="12.6" cy="18.6" r="2.6" fill="#1e1e1e"/><circle cx="12" cy="17.6" r="0.9" fill="#ddd"/>
<circle cx="16.8" cy="16.6" r="1.5" fill="#e8e8e0"/><circle cx="17.2" cy="17" r="0.7" fill="#333"/>
<circle cx="20.8" cy="15.6" r="1.6" fill="#e8e8e0"/><circle cx="21.2" cy="16.1" r="0.7" fill="#333"/>
<ellipse cx="30.5" cy="25.2" rx="1.6" ry="1.2" transform="rotate(35 30.5 25.2)" fill="#3a3232"/>
</svg>
<!-- teams -->
<div class="a" style="left:966px;top:780px;width:36px;height:36px;border-radius:4px;background:#f3e7e8"></div>
<svg class="a" style="left:971px;top:786px" width="25" height="22" viewBox="0 0 25 22">
<circle cx="19" cy="6" r="3" fill="#7b83eb"/><rect x="15" y="9.5" width="9.5" height="9" rx="3" fill="#7b83eb"/>
<circle cx="13" cy="5.5" r="3.6" fill="#5059c9"/><rect x="7" y="9" width="12" height="12.5" rx="4" fill="#5059c9"/>
<rect x="0" y="6" width="12" height="12" rx="1.2" fill="#4b53bc"/><path d="M3 9h6M6 9v6.5" stroke="#fff" stroke-width="1.6"/>
</svg>
<svg class="a" style="left:983px;top:781px" width="17" height="17" viewBox="0 0 17 17"><circle cx="8.5" cy="8.5" r="7.5" fill="#c42b1c"/><path d="M7 5.3l2-1.2V13" stroke="#fff" stroke-width="1.5" fill="none"/></svg>
<div class="a" style="left:976px;top:814px;width:15px;height:3px;border-radius:2px;background:#0067c0"></div>
<!-- last app -->
<svg class="a" style="left:1013px;top:787px" width="24" height="22" viewBox="0 0 24 22">
<rect x="0" y="0" width="24" height="22" fill="#0b2fcf"/><circle cx="12" cy="11" r="8" fill="none" stroke="#fff" stroke-width="1.6"/><rect x="6" y="8.5" width="12" height="5" rx="1.5" fill="#fff"/><circle cx="15.5" cy="11" r="1" fill="#0b2fcf"/>
</svg>
<div class="a" style="left:1022px;top:814px;width:6px;height:3px;border-radius:2px;background:#707070"></div>
<!-- tray -->
<svg class="a" style="left:1208px;top:793px" width="12" height="8" viewBox="0 0 12 8"><path d="M1 7L6 2l5 5" fill="none" stroke="#1f1f1f" stroke-width="1.4"/></svg>
<div class="a" style="left:1230px;top:779px;width:30px;height:37px;border-radius:4px;background:#0b63c1"></div>
<svg class="a" style="left:1238px;top:789px" width="14" height="18" viewBox="0 0 14 18"><rect x="4.5" y="0.5" width="5" height="10" rx="2.5" fill="#fff"/><path d="M1.8 7.5a5.2 5.2 0 0 0 10.4 0M7 12.7v4" fill="none" stroke="#fff" stroke-width="1.4"/></svg>
<div class="t" style="left:1272px;top:794px;font-size:11.5px;color:#1f1f1f;letter-spacing:-1px">CES</div>
<svg class="a" style="left:1308px;top:791px" width="18" height="13" viewBox="0 0 18 13" fill="none" stroke="#2a2020" stroke-width="1.5" stroke-linecap="round"><path d="M1.5 5a10.5 10.5 0 0 1 15 0M3.8 7.3a7.2 7.2 0 0 1 10.4 0M6.1 9.5a4 4 0 0 1 5.8 0"/><circle cx="9" cy="11.4" r="1.1" fill="#2a2020" stroke="none"/></svg>
<svg class="a" style="left:1331px;top:792px" width="16" height="12" viewBox="0 0 16 12" fill="none" stroke="#2a2020" stroke-width="1.3" stroke-linejoin="round"><path d="M1 4h2.5L6.5 1v10L3.5 8H1z"/><path d="M8.8 3.5a3.2 3.2 0 0 1 0 5M11.2 1.5a6 6 0 0 1 0 9" stroke-width="1.5"/></svg>
<svg class="a" style="left:1354px;top:790px" width="17" height="14" viewBox="0 0 17 14"><rect x="1.2" y="3.2" width="12.3" height="9.6" rx="1.5" fill="none" stroke="#2a2020" stroke-width="1.3"/><path d="M4 11.5l3.5-6H13v6z" fill="#2a2020"/><path d="M14.5 6a1.6 1.6 0 0 1 0 3.5z" fill="#2a2020"/><path d="M3.5 0.5L2 6h2.2L3 10.5" stroke="#2a2020" stroke-width="1.1" fill="none"/></svg>
<div class="t" style="left:1413px;top:784.5px;font-size:12px;color:#1f1f1f;letter-spacing:-0.5px">10:33</div>
<div class="t" style="left:1386px;top:799.5px;font-size:12px;color:#1f1f1f;letter-spacing:-0.6px">04.06.2025</div>
<!-- illustration -->
<svg class="a" style="left:745px;top:550px" width="208" height="150" viewBox="745 550 208 150">
<defs><radialGradient id="tg"><stop offset="0" stop-color="#c4e2de"/><stop offset="0.6" stop-color="#96cbc4"/><stop offset="1" stop-color="#8cc2bb"/></radialGradient></defs>
<rect x="762" y="571" width="19" height="8" fill="#a9c4de"/><rect x="761" y="570" width="17" height="6" fill="#7c97bc"/>
<rect x="841" y="564.5" width="74" height="54" rx="2" fill="#f6c46c"/><rect x="841" y="564.5" width="74" height="4" fill="#f9d892"/>
<rect x="913.5" y="588.5" width="34" height="34.5" rx="6" fill="url(#tg)"/>
<path d="M912 559h22.5v15h-16l-6.5 4z" fill="#a88ee2"/><rect x="922" y="562" width="2.4" height="7" fill="#2a2850"/><circle cx="923.2" cy="571.5" r="1.2" fill="#2a2850"/>
<rect x="775" y="592" width="74.5" height="54" rx="3" fill="#a7c6ea"/><rect x="775" y="592" width="74.5" height="3" fill="#c6dcf2"/>
<!-- person 2 orange -->
<path d="M827 565 L851 588 C855 586 860 585 866 585 L882 585 C892 586 899 596 901 618 L858 618 C857 610 856 606 852 603 L822 576z" fill="#e0685a"/>
<path d="M866 585c0-3 4-4 8-4s8 1 8 4l-2 4h-12z" fill="#e8a888"/>
<ellipse cx="874" cy="574" rx="9" ry="11" fill="#f0b898"/>
<path d="M863 570c0-7 5-10 11-10s11 4 10 10c-2-3-5-4-8-4-4 0-8 2-13 4z" fill="#e8783a"/>
<rect x="868" y="601" width="13.5" height="7.5" fill="#2a2a48"/>
<!-- person 1 purple -->
<path d="M784 646 C783 630 784 612 792 606 L806 603 C812 600 815 592 817 580 L826 581 C827 600 826 620 826 646z" fill="#9f82dc"/>
<ellipse cx="800" cy="594" rx="10" ry="11" fill="#f6d8c4"/>
<path d="M789 588c0-6 6-9 12-8 5 1 7 3 8 6-4-1-9 0-12 2l-3 5z" fill="#e36a52"/>
<path d="M802 611l-2 10M806 611l1 10" stroke="#2a2a48" stroke-width="1.2"/>
<rect x="795" y="637" width="22" height="9" rx="2" fill="#2a2a48"/>
<path d="M816 564c3-4 7-4 9 0l2 14-10 2z" fill="#b27a62"/>
<path d="M812 560l2 3M820 554l1 4M826 556l-2 4M810 569l3 1" stroke="#3a5a58" stroke-width="0.9"/>
<!-- red bubble -->
<path d="M751 635h18v15h2l-2 3h-16a2 2 0 0 1-2-2z" fill="#e0675a"/><circle cx="756" cy="644" r="1.1" fill="#fff"/><circle cx="760" cy="644" r="1.1" fill="#fff"/><circle cx="764" cy="644" r="1.1" fill="#fff"/>
<!-- purple window + woman -->
<rect x="827.5" y="635" width="75" height="54" rx="3" fill="#b48ee0"/><rect x="827.5" y="635" width="75" height="3" fill="#c8a8ee"/>
<path d="M899 627.5h17.5v12h-15l-2.5 2z" fill="#a7c6ea"/><circle cx="904" cy="634" r=".9" fill="#2a2a48"/><circle cx="907.5" cy="634" r=".9" fill="#2a2a48"/><circle cx="911" cy="634" r=".9" fill="#2a2a48"/>
<path d="M850 690 C848 670 852 652 866 647 C880 645 893 652 896 668 L898 690z" fill="#f8e8d6"/><path d="M831 659 L846 684 C848 688 852 689 855 686 L858 676 L851 660 C845 655 838 656 831 659z" fill="#f8e8d6"/><path d="M846 684 L858 662" stroke="#d8c8b8" stroke-width="0.6"/>
<ellipse cx="868" cy="636" rx="9" ry="10" fill="#7a4a36"/>
<path d="M858 632c-2-8 4-13 11-13s13 5 12 12c-1 5-3 9-6 11 1-5 0-10-3-12-4 1-9 1-14 2z" fill="#232248"/>
<path d="M816 657c5-2 10-2 16 1l-3 5c-4-1-9-2-13-6z" fill="#7a4a36"/>
<path d="M855 667c4-1 8 2 10 6l-4 4c-3-2-6-5-6-10z" fill="#7a4a36"/>
<path d="M799 668h18.5v12h-14l-4.5 2.5z" fill="#f6c46c"/><rect x="807" y="671" width="2" height="4" fill="#fff3c8"/>
</svg>
</body></html>
